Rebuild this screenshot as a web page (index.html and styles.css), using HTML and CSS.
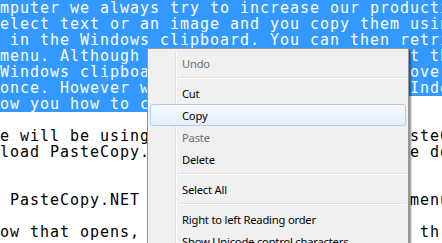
FILE: index.html
```html
<!DOCTYPE html>
<html lang="en">
<head>
    <meta charset="UTF-8">
    <title>PasteCopy.NET</title>
    <link rel="stylesheet" href="styles.css">
</head>
<body>
    <div class="doc">
        <div class="line sel">mputer we always try to increase our productivity</div>
        <div class="line sel">elect text or an image and you copy them using</div>
        <div class="line sel"> in the Windows clipboard. You can then retrieve</div>
        <div class="line sel">menu. Although this feature is useful, but the</div>
        <div class="line sel">Windows clipboard can only hold one item overall</div>
        <div class="line sel">once. However we found a tool that works Indeed</div>
        <div class="line"><span class="sel">ow you how to copy multiple items.</span></div>
        <div class="line"></div>
        <div class="line">e will be using a small program called PasteCopy.NET</div>
        <div class="line">load PasteCopy.NET, go to the site and the download</div>
        <div class="line"></div>
        <div class="line"></div>
        <div class="line"> PasteCopy.NET from its web site. In the menu</div>
        <div class="line"></div>
        <div class="line">ow that opens, select the options for all th</div>
    </div>

    <!-- menu contextual sobre el texto -->
    <div class="menu">
        <div class="item disabled">Undo</div>
        <div class="sep"></div>
        <div class="item">Cut</div>
        <div class="item hover">Copy</div>
        <div class="item disabled">Paste</div>
        <div class="item">Delete</div>
        <div class="sep"></div>
        <div class="item">Select All</div>
        <div class="sep"></div>
        <div class="item">Right to left Reading order</div>
        <div class="item">Show Unicode control characters</div>
    </div>
</body>
</html>
```

FILE: styles.css
```css
body {
    margin: 0;
    padding: 0;
    background-color: #ffffff;
    overflow: hidden;
}
.doc {
    font-family: "DejaVu Sans Mono", monospace;
    font-size: 15px;
    letter-spacing: 0.97px;
    line-height: 16px;
    color: #000;
}
.line {
    height: 16px;
    white-space: pre;
    overflow: hidden;
}
.sel {
    background-color: #3399ff; /* seleccion de Windows */
    color: #fff;
}
.line span.sel {
    display: inline-block;
    height: 16px;
}
.menu {
    position: absolute;
    left: 147px;
    top: 48px;
    width: 256px;
    height: 210px;
    padding: 3px 2px;
    background-color: #f0f0f0;
    border: 1px solid #979797;
    box-shadow: 2px 2px 2px rgba(0, 0, 0, 0.45);
    font-family: "Noto Sans", sans-serif;
    font-size: 11.2px;
    letter-spacing: -0.2px;
    color: #000;
    display: flex;
    flex-direction: column;
}
.menu::before {
    /* linea del margen de iconos */
    content: "";
    position: absolute;
    left: 27px;
    top: 2px;
    bottom: 0;
    width: 1px;
    background-color: #e2e3e3;
    border-right: 1px solid #fff;
}
.item {
    position: relative;
    height: 22px;
    line-height: 22px;
    padding-left: 31px;
    border: 1px solid transparent;
    border-radius: 3px;
    box-sizing: border-box;
}
.item.disabled {
    color: #6d6d6d;
}
.item.hover {
    border-color: #aecff7;
    background: linear-gradient(#f5f9fe, #e5eefb);
}
.sep {
    height: 8px;
    margin-left: 29px;
    position: relative;
}
.sep::after {
    content: "";
    position: absolute;
    left: 0;
    right: 0;
    top: 3px;
    height: 1px;
    background-color: #e0e0e0;
    border-bottom: 1px solid #fff;
}
```
